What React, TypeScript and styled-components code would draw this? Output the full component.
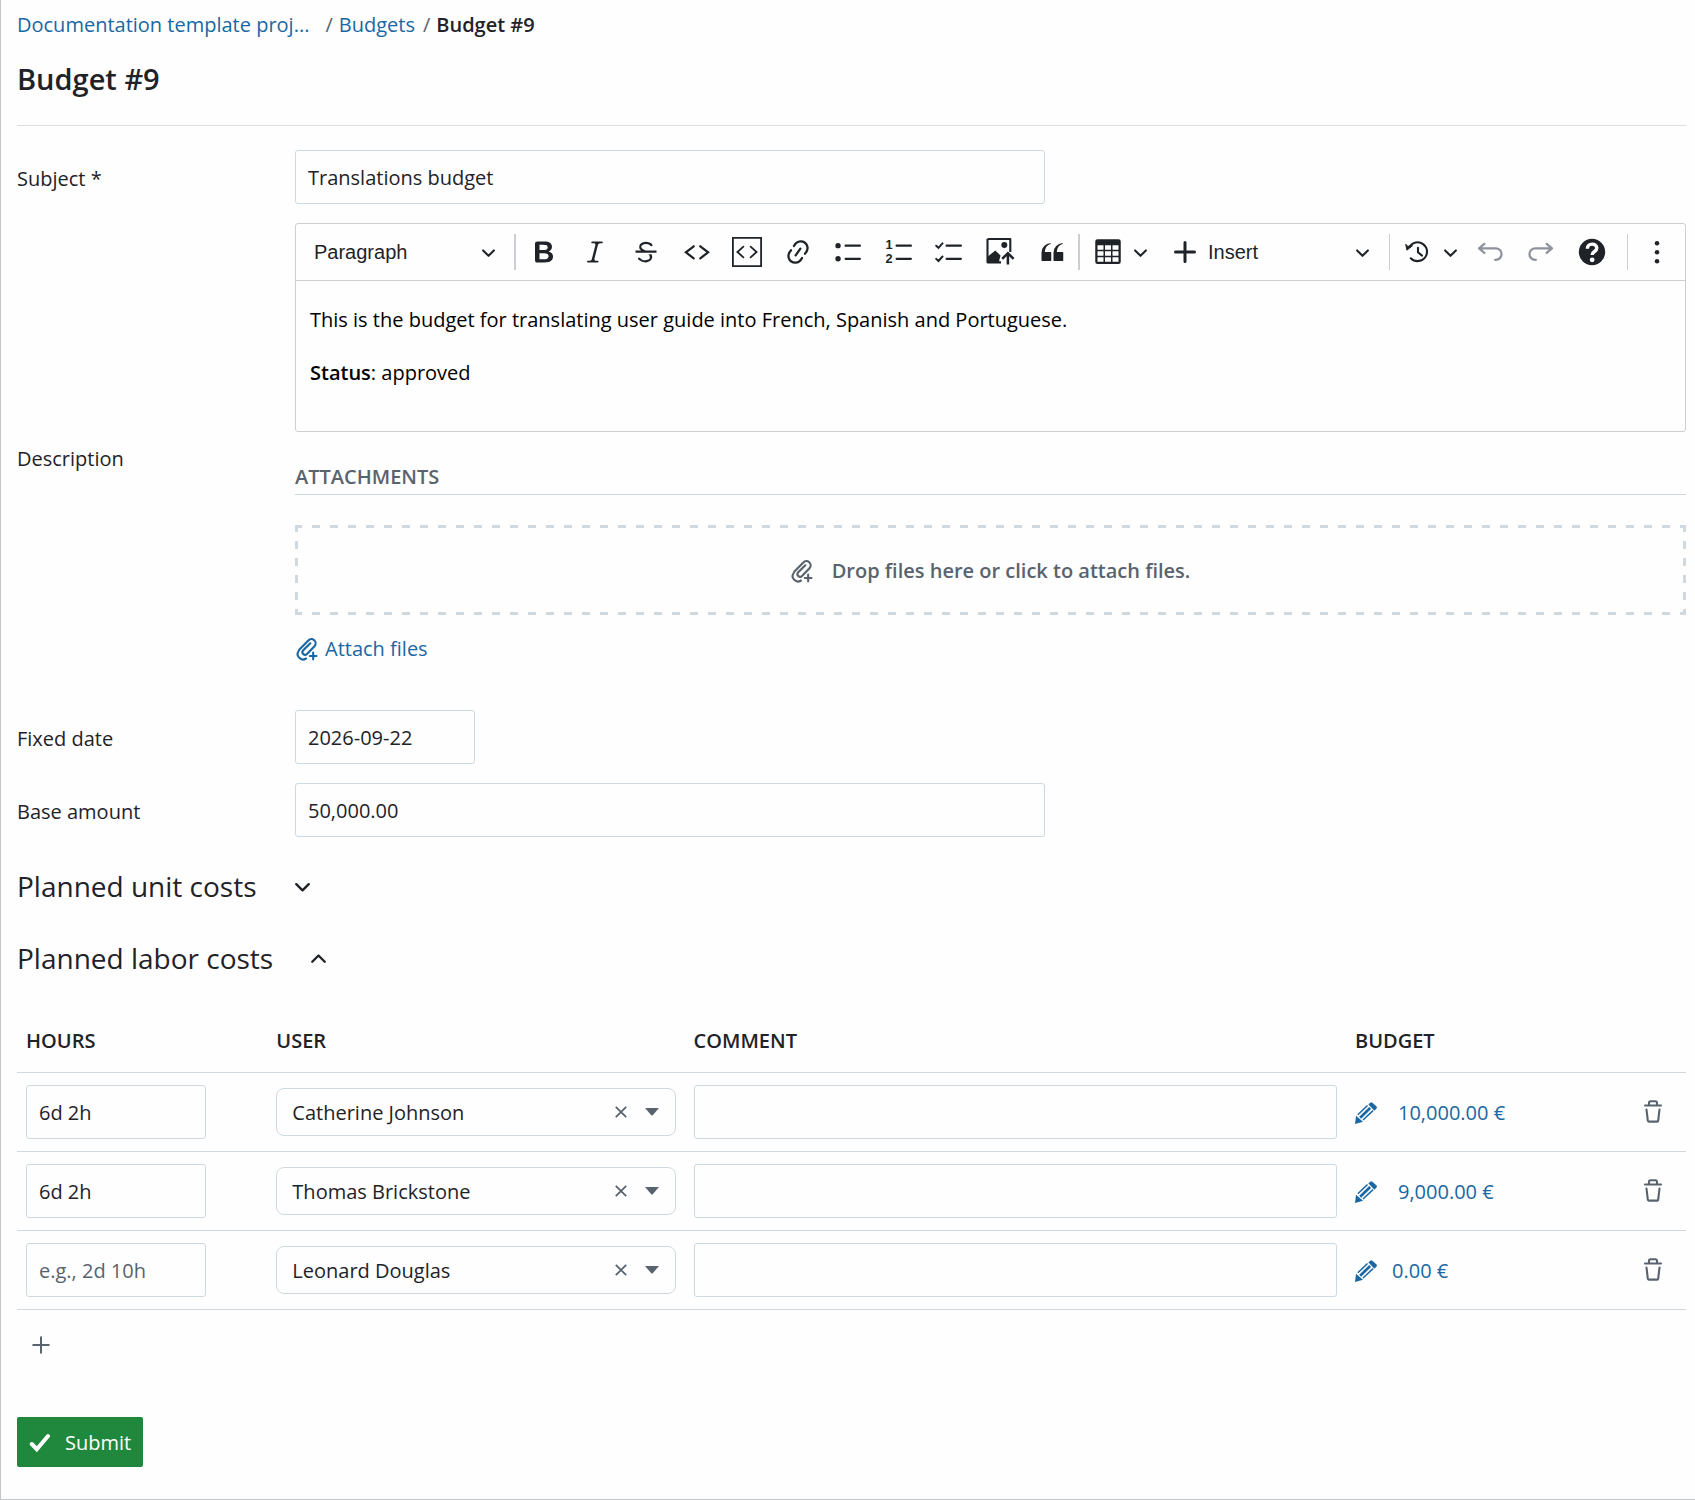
import React, { useState } from "react";
import styled, { createGlobalStyle } from "styled-components";

const color = {
  text: "#1f2328",
  muted: "#59636e",
  link: "#1a67a3",
  border: "#d1d9e0",
  editorBorder: "#ccced1",
  disabled: "#8f919d",
  success: "#1f883d",
};

const GlobalStyle = createGlobalStyle`
  *, *::before, *::after { box-sizing: border-box; }
  body {
    margin: 0;
    background: #fefefe;
    color: ${color.text};
    font-family: "Open Sans", "Noto Sans", sans-serif;
    font-size: 20px;
    line-height: 28px;
  }
  button, input, select { font: inherit; color: inherit; }
`;

const Page = styled.main`
  min-height: 100vh;
  padding: 0 9px 32px 16px;
  border-left: 1px solid #c4c6c8;
  border-bottom: 1px solid #c4c6c8;
`;

const Breadcrumbs = styled.nav`
  ol {
    display: flex;
    align-items: center;
    height: 50px;
    margin: 0;
    padding: 0;
    list-style: none;
  }
  li + li::before {
    content: "/";
    padding: 0 6px 0 8px;
    color: ${color.muted};
  }
  li:first-child { margin-right: 8px; }
  a { color: ${color.link}; text-decoration: none; }
  [aria-current] { font-weight: 600; }
`;

const PageHeader = styled.header`
  padding: 11px 0 28px;
  border-bottom: 1px solid #dcdfe2;
`;

const Title = styled.h1`
  margin: 0;
  font-size: 29px;
  font-weight: 600;
  line-height: 36px;
`;

const Form = styled.form`
  display: flex;
  flex-direction: column;
  align-items: stretch;
`;

const Fields = styled.div`
  display: grid;
  gap: 19px;
  margin: 24px 0 31px;
`;

const Field = styled.div`
  display: grid;
  grid-template-columns: 278px minmax(0, 1fr);
  align-items: center;
`;

const Label = styled.label`
  justify-self: start;
  padding-top: 3px;
`;

const TextInput = styled.input<{ $width: string }>`
  display: block;
  width: 100%;
  max-width: ${(p) => p.$width};
  height: 54px;
  padding: 0 12px;
  border: 1px solid ${color.border};
  border-radius: 3px;
  background: transparent;
  &::placeholder { color: ${color.muted}; opacity: 1; }
`;

const Editor = styled.div`
  border: 1px solid ${color.editorBorder};
  border-radius: 3px;
`;

const Toolbar = styled.div`
  display: flex;
  align-items: center;
  height: 57px;
  border-bottom: 1px solid ${color.editorBorder};
  font-family: "Liberation Sans", Arial, sans-serif;
`;

const Divider = styled.span<{ $thick?: boolean }>`
  flex: none;
  width: ${(p) => (p.$thick ? 2 : 1)}px;
  height: 36px;
  background: ${color.editorBorder};
`;

const ToolGroup = styled.div<{ $width?: string; $grow?: boolean; $pad?: string }>`
  display: flex;
  align-items: center;
  flex: ${(p) => (p.$grow ? "1 1 0" : "none")};
  width: ${(p) => p.$width ?? "auto"};
  padding: ${(p) => p.$pad ?? "0"};
`;

const Tool = styled.button<{ $disabled?: boolean }>`
  display: flex;
  flex: 1 1 0;
  align-items: center;
  justify-content: center;
  min-width: 0;
  height: 46px;
  padding: 0;
  border: 0;
  background: none;
  color: ${(p) => (p.$disabled ? color.disabled : color.text)};
`;

const MenuTool = styled(Tool)`
  flex: none;
  gap: 11px;
  padding: 0 8px 0 13px;
`;

const InsertTool = styled(Tool)`
  justify-content: flex-start;
  gap: 12px;
  padding: 0 20px 0 19px;
  span { flex: 1; text-align: left; }
`;

const SelectBox = styled.div<{ $framed?: boolean }>`
  display: grid;
  grid-template-columns: minmax(0, 1fr) 30px 32px;
  align-items: center;
  width: ${(p) => (p.$framed ? "100%" : "218px")};
  height: ${(p) => (p.$framed ? 48 : 46)}px;
  padding-right: ${(p) => (p.$framed ? 7 : 10)}px;
  border: ${(p) => (p.$framed ? `1px solid ${color.border}` : "0")};
  border-radius: 8px;
  > select {
    grid-area: 1 / 1 / 2 / 4;
    width: 100%;
    height: 100%;
    padding: ${(p) => (p.$framed ? "2px 60px 0 15px" : "0 40px 0 18px")};
    border: 0;
    background: transparent;
    appearance: none;
  }
  > button { grid-area: 1 / 2; }
  > svg { grid-area: 1 / 3; justify-self: center; pointer-events: none; }
`;

const IconButton = styled.button<{ $size: number }>`
  display: flex;
  align-items: center;
  justify-content: center;
  width: ${(p) => p.$size}px;
  height: ${(p) => p.$size}px;
  padding: 0;
  border: 0;
  background: none;
  color: ${color.muted};
`;

const EditorBody = styled.div`
  min-height: 150px;
  padding: 25px 14px 23px;
  color: #000;
  outline: none;
  p { margin: 0 0 25px; }
  p:last-child { margin: 0; }
  strong { font-weight: 600; }
`;

const AttachmentsTitle = styled.h2`
  margin: 31px 0 30px;
  padding-bottom: 3px;
  border-bottom: 1px solid ${color.border};
  color: ${color.muted};
  font-size: 20px;
  font-weight: 600;
  text-transform: uppercase;
`;

const dash = (direction: string, period: number) =>
  `repeating-linear-gradient(${direction}, ${color.border} 0 7px, transparent 7px ${period - 1}px, ${color.border} ${period - 1}px ${period}px)`;

const DropZone = styled.button`
  display: flex;
  align-items: center;
  justify-content: center;
  gap: 19px;
  width: 100%;
  height: 90px;
  padding: 2px 0 0;
  border: 0;
  background:
    ${dash("to right", 18)} top / 100% 3px no-repeat,
    ${dash("to right", 18)} bottom / 100% 3px no-repeat,
    ${dash("to bottom", 17)} left / 3px 100% no-repeat,
    ${dash("to bottom", 17)} right / 3px 100% no-repeat;
  color: ${color.muted};
  font-weight: 600;
`;

const AttachLink = styled.a`
  display: inline-flex;
  align-items: center;
  gap: 7px;
  margin: 20px 0 28px 1px;
  color: ${color.link};
  text-decoration: none;
`;

const SectionTitle = styled.h2`
  margin: 0 0 36px;
  font-size: 28px;
  font-weight: 400;
  line-height: 36px;
`;

const SectionToggle = styled.button`
  display: flex;
  align-items: center;
  gap: 38px;
  padding: 0;
  border: 0;
  background: none;
`;

const CostTable = styled.table`
  width: 100%;
  border-collapse: separate;
  border-spacing: 0;
  table-layout: fixed;
  th {
    height: 61px;
    padding: 0 9px 2px;
    font-weight: 600;
    text-align: left;
    text-transform: uppercase;
  }
  td { height: 79px; padding: 0 9px; }
  th, td { border-bottom: 1px solid ${color.border}; }
`;

const Col = styled.col<{ $width?: string }>`
  width: ${(p) => p.$width ?? "auto"};
`;

const Amount = styled.a<{ $gap: number }>`
  display: flex;
  align-items: center;
  gap: ${(p) => p.$gap}px;
  padding-top: 2px;
  color: ${color.link};
  text-decoration: none;
  white-space: nowrap;
`;

const AddRow = styled.div`
  padding: 15px 4px 52px;
  display: flex;
`;

const Submit = styled.button`
  display: flex;
  align-items: center;
  align-self: flex-start;
  gap: 14px;
  height: 50px;
  padding: 2px 12px 0;
  border: 0;
  border-radius: 2px;
  background: ${color.success};
  color: #fff;
`;

const Glyph = ({ d, children }: { d?: string; children?: React.ReactNode }) => (
  <svg width="30" height="30" viewBox="0 0 20 20" fill="currentColor" aria-hidden="true">
    {d && <path d={d} />}
    {children}
  </svg>
);

const Chevron = ({ up, size = 13 }: { up?: boolean; size?: number }) => (
  <svg width={size} height={size} viewBox="0 0 14 14" fill="none" stroke="currentColor" strokeWidth="2.2" strokeLinecap="round" strokeLinejoin="round" aria-hidden="true">
    <path d={up ? "M1.2 10 7 4.2 12.8 10" : "M1.2 4.8 7 10.6 12.8 4.8"} />
  </svg>
);

const ClipIcon = () => (
  <svg width="22" height="23" viewBox="88 178 66 69" fill="none" stroke="currentColor" strokeWidth="6.4" strokeLinecap="round" aria-hidden="true">
    <path d="M118 239.500a16 16 0 0 1-22-22.500Q97 214 99 212L125 185.500a12.500 12.500 0 0 1 18.500 17L121 226a8 8 0 0 1-12-10.500L131 194" />
    <path d="M139.500 222v20M129.500 232h20" />
  </svg>
);

const PencilIcon = () => (
  <svg width="22" height="22" viewBox="168 248 66 66" fill="currentColor" aria-hidden="true">
    <path d="M208 255l6-5a5 5 0 0 1 6 0l12 11a5 5 0 0 1 0 7l-6 6z" />
    <path d="M171 289l21 18-24 7z" />
    <path d="M176.500 286.500l29-28M192 302l30-28" fill="none" stroke="currentColor" strokeWidth="4.500" />
    <path d="M183.500 295l30-29" fill="none" stroke="currentColor" strokeWidth="8" />
  </svg>
);

const TrashIcon = () => (
  <svg width="20" height="24" viewBox="0 0 20 24" fill="none" stroke="currentColor" strokeWidth="2.1" strokeLinecap="round" strokeLinejoin="round" aria-hidden="true">
    <path d="M2 5.500h16M6 5.300V2.700a1.500 1.500 0 0 1 1.500-1.500h5a1.500 1.500 0 0 1 1.500 1.500v2.600M3.500 9.500l1.300 11.200a1 1 0 0 0 1 .900h8.400a1 1 0 0 0 1-.900L16.500 9.500" />
  </svg>
);

const PlusIcon = ({ size, weight }: { size: number; weight: number }) => (
  <svg width={size} height={size} viewBox="0 0 22 22" fill="none" stroke="currentColor" strokeWidth={weight} strokeLinecap="round" aria-hidden="true">
    <path d="M11 1.500v19M1.500 11h19" />
  </svg>
);

const paths = {
  bold: "M10.187 17H5.773c-.637 0-1.092-.138-1.364-.415-.273-.277-.409-.718-.409-1.323V4.738c0-.617.14-1.062.419-1.332.279-.27.73-.406 1.354-.406h4.68c.69 0 1.288.041 1.793.124.506.083.96.242 1.36.478.341.197.644.447.906.75a3.262 3.262 0 0 1 .808 2.162c0 1.401-.722 2.426-2.167 3.075C15.05 10.175 16 11.315 16 13.01a3.756 3.756 0 0 1-2.296 3.504 6.1 6.1 0 0 1-1.517.377c-.571.073-1.238.11-2 .11zm-.217-6.217H7v4.087h3.069c1.977 0 2.965-.69 2.965-2.072 0-.707-.256-1.22-.768-1.537-.512-.319-1.277-.478-2.296-.478zM7 5.13v3.619h2.606c.729 0 1.292-.067 1.69-.2a1.6 1.6 0 0 0 .91-.765c.165-.267.247-.566.247-.897 0-.707-.26-1.176-.778-1.409-.519-.232-1.31-.348-2.375-.348H7z",
  italic: "m9.586 14.633.021.004c-.036.335.095.655.393.962.082.083.173.15.274.201h1.474a.6.6 0 1 1 0 1.2H5.304a.6.6 0 0 1 0-1.2h1.15c.474-.07.809-.182 1.005-.334.157-.122.291-.32.404-.597l2.416-9.55a1.053 1.053 0 0 0-.281-.823 1.12 1.12 0 0 0-.442-.296H8.15a.6.6 0 0 1 0-1.2h6.443a.6.6 0 1 1 0 1.2h-1.195c-.376.056-.65.155-.823.296-.215.175-.423.439-.623.79l-2.366 9.347z",
  strike: "M7 16.4c-.8-.4-1.5-.9-2.2-1.5a.6.6 0 0 1-.2-.5l.3-.6h1c1 1.2 2.1 1.7 3.7 1.7 1 0 1.8-.3 2.3-.6.6-.4.6-1.2.6-1.3.2-1.2-.9-2.1-.9-2.1h2.1c.3.7.4 1.2.4 1.7v.8l-.6 1.2c-.6.8-1.1 1-1.6 1.2a6 6 0 0 1-2.4.6c-1 0-1.8-.3-2.5-.6zM6.8 9 6 8.3c-.4-.5-.5-.8-.5-1.6 0-.7.1-1.3.5-1.8.4-.6 1-1 1.6-1.3a6.3 6.3 0 0 1 4.7 0 4 4 0 0 1 1.7 1l.3.7c0 .1.2.4-.2.7-.4.2-.9.1-1 0a3 3 0 0 0-1.2-1c-.4-.2-1-.3-2-.4-.7 0-1.4.2-2 .6-.8.6-1 .8-1 1.5 0 .8.5 1 1.2 1.5.6.4 1.1.7 1.9 1H6.8zM3 10.5V9h14v1.5z",
  link: "m11.077 15 .991-1.416a.75.75 0 1 1 1.229.86l-1.148 1.64a.748.748 0 0 1-.217.206 5.251 5.251 0 0 1-8.503-5.955.741.741 0 0 1 .12-.274l1.147-1.639a.75.75 0 1 1 1.228.86L4.933 10.7l.006.003a3.75 3.75 0 0 0 6.132 4.294l.006.004zm5.494-5.335a.748.748 0 0 1-.12.274l-1.147 1.639a.75.75 0 1 1-1.228-.86l.86-1.23a3.75 3.75 0 0 0-6.144-4.301l-.86 1.229a.75.75 0 0 1-1.229-.86l1.148-1.64a.748.748 0 0 1 .217-.206 5.251 5.251 0 0 1 8.503 5.955zm-4.563-2.532a.75.75 0 0 1 .184 1.045l-3.155 4.505a.75.75 0 1 1-1.229-.86l3.155-4.506a.75.75 0 0 1 1.045-.184z",
  lines: "M7 5.750c0 .414.336.75.75.75h9.500a.75.75 0 1 0 0-1.500h-9.500a.75.75 0 0 0-.75.75zM7 14.500c0 .414.336.75.75.75h9.500a.75.75 0 1 0 0-1.500h-9.500a.75.75 0 0 0-.75.75z",
  quote: "M3 10.423a6.5 6.5 0 0 1 6.056-6.408l.038.67C6.448 5.423 5.354 7.663 5.22 10H9c.552 0 .5.432.5.986v4.511c0 .554-.448.503-1 .503h-5c-.552 0-.5-.449-.5-1.003v-4.574zm8 0a6.5 6.5 0 0 1 6.056-6.408l.038.67c-2.646.739-3.74 2.979-3.873 5.315H17c.552 0 .5.432.5.986v4.511c0 .554-.448.503-1 .503h-5c-.552 0-.5-.449-.5-1.003v-4.574z",
  table: "M3 5.5v3h4v-3H3Zm0 4v3h4v-3H3Zm0 4v3h4v-3H3Zm5 3h4v-3H8v3Zm5 0h4v-3h-4v3Zm4-4v-3h-4v3h4Zm0-4v-3h-4v3h4Zm1.5 8A1.5 1.5 0 0 1 17 18H3a1.500 1.500 0 0 1-1.500-1.500V3A1.500 1.500 0 0 1 3 1.500h14A1.500 1.500 0 0 1 18.500 3v13.500Zm-6.500-4v-3H8v3h4Zm0-4v-3H8v3h4Z",
};

const ImageGlyph = () => (
  <Glyph>
    <path d="M1 1.300h15.200v8.700M10 16.900H1V1.300" fill="none" stroke="currentColor" strokeWidth="1.400" strokeLinejoin="round" />
    <circle cx="12.200" cy="5.400" r="2" />
    <path d="M1 13.200 6.200 9l3.500 3.400-1.200 4.600H1z" />
    <path d="M14.600 18.300v-7.200M10.800 14.600l3.800-3.800 3.800 3.800" fill="none" stroke="currentColor" strokeWidth="1.700" />
  </Glyph>
);

const UndoGlyph = ({ flip }: { flip?: boolean }) => (
  <Glyph>
    <path
      d="M6.200 4.600 2.700 7.600l3.500 3M3.200 7.600h10.700a3.800 3.800 0 0 1 0 7.600h-.500"
      transform={flip ? "translate(20 0) scale(-1 1)" : undefined}
      fill="none" stroke="currentColor" strokeWidth="1.500" strokeLinecap="round" strokeLinejoin="round"
    />
  </Glyph>
);

const inlineTools: { name: string; icon: React.ReactNode }[] = [
  { name: "Bold", icon: <Glyph d={paths.bold} /> },
  { name: "Italic", icon: <Glyph d={paths.italic} /> },
  { name: "Strikethrough", icon: <Glyph d={paths.strike} /> },
  { name: "Code", icon: <Glyph><path d="M7.800 6.200 2.600 10.200l5.200 4M12.200 6.200l5.200 4-5.200 4" fill="none" stroke="currentColor" strokeWidth="1.500" strokeLinecap="round" /></Glyph> },
  { name: "Code block", icon: <Glyph><path d="M.600.600h18.800v18.800H.600zM7.600 6.400 3.600 10l4 3.600M12.400 6.400l4 3.600-4 3.600" fill="none" stroke="currentColor" strokeWidth="1.200" strokeLinecap="round" /></Glyph> },
  { name: "Link", icon: <Glyph d={paths.link} /> },
  { name: "Bulleted list", icon: <Glyph d={paths.lines}><circle cx="2.700" cy="5.750" r="1.800" /><circle cx="2.700" cy="14.500" r="1.800" /></Glyph> },
  { name: "Numbered list", icon: <Glyph d={paths.lines}><text x="0.300" y="8.200" fontSize="8.500" fontWeight="700">1</text><text x="0.300" y="17.600" fontSize="8.500" fontWeight="700">2</text></Glyph> },
  { name: "To-do list", icon: <Glyph d={paths.lines}><path d="M.800 5.800l1.500 1.400 2.700-3M.800 14.600l1.500 1.400 2.700-3" fill="none" stroke="currentColor" strokeWidth="1.300" strokeLinecap="round" /></Glyph> },
  { name: "Upload image", icon: <ImageGlyph /> },
  { name: "Block quote", icon: <Glyph d={paths.quote} /> },
];

const rows = [
  { hours: "6d 2h", user: "Catherine Johnson", amount: "10,000.00 €", gap: 21 },
  { hours: "6d 2h", user: "Thomas Brickstone", amount: "9,000.00 €", gap: 21 },
  { hours: "", user: "Leonard Douglas", amount: "0.00 €", gap: 15 },
];

const EditorToolbar = () => (
  <Toolbar role="toolbar" aria-label="Editor toolbar">
    <SelectBox>
      <select aria-label="Heading" defaultValue="Paragraph">
        <option>Paragraph</option>
        <option>Heading 1</option>
        <option>Heading 2</option>
      </select>
      <Chevron />
    </SelectBox>
    <Divider $thick />
    <ToolGroup $width="562px" $pad="0 1px 0 3px">
      {inlineTools.map((t) => (
        <Tool key={t.name} type="button" aria-label={t.name}>{t.icon}</Tool>
      ))}
    </ToolGroup>
    <Divider $thick />
    <MenuTool type="button" aria-label="Insert table">
      <Glyph d={paths.table} />
      <Chevron />
    </MenuTool>
    <ToolGroup $grow>
      <InsertTool type="button" aria-haspopup="menu">
        <PlusIcon size={22} weight={3} />
        <span>Insert</span>
        <Chevron />
      </InsertTool>
    </ToolGroup>
    <Divider />
    <MenuTool type="button" aria-label="Revision history">
      <Glyph>
        <path d="M4.300 6.600a6.300 6.300 0 1 1 .9 7.600M10 7.200v3l2.700 2.200" fill="none" stroke="currentColor" strokeWidth="1.400" strokeLinecap="round" />
        <path d="M1.800 4.800 3.200 6.200l3.200-.4-3.800 3z" stroke="currentColor" strokeWidth=".6" />
      </Glyph>
      <Chevron />
    </MenuTool>
    <ToolGroup $width="162px" $pad="0 10px 0 0">
      <Tool type="button" aria-label="Undo" $disabled><UndoGlyph /></Tool>
      <Tool type="button" aria-label="Redo" $disabled><UndoGlyph flip /></Tool>
      <Tool type="button" aria-label="Help">
        <Glyph>
          <circle cx="10" cy="10" r="8.800" />
          <path d="M6.900 7.800c0-4 6.300-4 6.300-.4 0 2.500-3.100 2.100-3.100 4.600" fill="none" stroke="#fff" strokeWidth="2.300" />
          <circle cx="10.100" cy="15.200" r="1.600" fill="#fff" />
        </Glyph>
      </Tool>
    </ToolGroup>
    <ToolGroup $width="58px">
      <Divider />
      <Tool type="button" aria-label="Show more items">
        <Glyph><circle cx="10" cy="4.200" r="1.500" /><circle cx="10" cy="10.200" r="1.500" /><circle cx="10" cy="16.200" r="1.500" /></Glyph>
      </Tool>
    </ToolGroup>
  </Toolbar>
);

export default function App() {
  const [unitOpen, setUnitOpen] = useState(false);
  const [laborOpen, setLaborOpen] = useState(true);

  return (
    <Page>
      <GlobalStyle />
      <Breadcrumbs aria-label="Breadcrumb">
        <ol>
          <li><a href="#project">Documentation template proj...</a></li>
          <li><a href="#budgets">Budgets</a></li>
          <li><span aria-current="page">Budget #9</span></li>
        </ol>
      </Breadcrumbs>
      <PageHeader>
        <Title>Budget #9</Title>
      </PageHeader>
      <Form onSubmit={(e) => e.preventDefault()}>
        <Fields>
          <Field>
            <Label htmlFor="subject">Subject *</Label>
            <TextInput id="subject" $width="750px" defaultValue="Translations budget" />
          </Field>
          <Field>
            <Label as="span" id="description-label">Description</Label>
            <div>
              <Editor>
                <EditorToolbar />
                <EditorBody role="textbox" aria-multiline="true" aria-labelledby="description-label" contentEditable suppressContentEditableWarning spellCheck={false}>
                  <p>This is the budget for translating user guide into French, Spanish and Portuguese.</p>
                  <p><strong>Status</strong>: approved</p>
                </EditorBody>
              </Editor>
              <AttachmentsTitle>Attachments</AttachmentsTitle>
              <DropZone type="button">
                <ClipIcon />
                Drop files here or click to attach files.
              </DropZone>
              <AttachLink href="#attach">
                <ClipIcon />
                Attach files
              </AttachLink>
            </div>
          </Field>
          <Field>
            <Label htmlFor="fixed-date">Fixed date</Label>
            <TextInput id="fixed-date" $width="180px" defaultValue="2026-09-22" />
          </Field>
          <Field>
            <Label htmlFor="base-amount">Base amount</Label>
            <TextInput id="base-amount" $width="750px" defaultValue="50,000.00" />
          </Field>
        </Fields>

        <SectionTitle>
          <SectionToggle type="button" aria-expanded={unitOpen} onClick={() => setUnitOpen(!unitOpen)}>
            Planned unit costs
            <Chevron up={unitOpen} size={15} />
          </SectionToggle>
        </SectionTitle>
        <SectionTitle>
          <SectionToggle type="button" aria-expanded={laborOpen} onClick={() => setLaborOpen(!laborOpen)}>
            Planned labor costs
            <Chevron up={laborOpen} size={15} />
          </SectionToggle>
        </SectionTitle>

        {laborOpen && (
          <>
            <CostTable>
              <colgroup>
                <Col $width="15%" />
                <Col $width="25%" />
                <Col />
                <Col $width="274px" />
                <Col $width="66px" />
              </colgroup>
              <thead>
                <tr>
                  <th scope="col">Hours</th>
                  <th scope="col">User</th>
                  <th scope="col">Comment</th>
                  <th scope="col">Budget</th>
                  <th aria-label="Actions" />
                </tr>
              </thead>
              <tbody>
                {rows.map((r) => (
                  <tr key={r.user}>
                    <td><TextInput aria-label="Hours" $width="180px" defaultValue={r.hours} placeholder="e.g., 2d 10h" /></td>
                    <td>
                      <SelectBox $framed>
                        <select aria-label="User" defaultValue={r.user}>
                          {rows.map((o) => <option key={o.user}>{o.user}</option>)}
                        </select>
                        <IconButton type="button" $size={30} aria-label="Clear user">
                          <svg width="12" height="12" viewBox="0 0 12 12" fill="none" stroke="currentColor" strokeWidth="1.800" aria-hidden="true">
                            <path d="M.800.800l10.400 10.400M11.200.800.800 11.200" />
                          </svg>
                        </IconButton>
                        <svg width="14" height="8" viewBox="0 0 14 8" fill={color.muted} aria-hidden="true"><path d="M0 0h14L7.500 7.500h-1z" /></svg>
                      </SelectBox>
                    </td>
                    <td><TextInput aria-label="Comment" $width="none" /></td>
                    <td>
                      <Amount href="#edit-amount" $gap={r.gap}>
                        <PencilIcon />
                        {r.amount}
                      </Amount>
                    </td>
                    <td>
                      <IconButton type="button" $size={48} aria-label="Delete row"><TrashIcon /></IconButton>
                    </td>
                  </tr>
                ))}
              </tbody>
            </CostTable>
            <AddRow>
              <IconButton type="button" $size={40} aria-label="Add planned labor costs">
                <PlusIcon size={18} weight={2.4} />
              </IconButton>
            </AddRow>
          </>
        )}

        <Submit type="submit">
          <svg width="22" height="20" viewBox="0 0 22 20" fill="none" stroke="currentColor" strokeWidth="4" strokeLinecap="round" aria-hidden="true">
            <path d="M2.800 11l5 5.200L19 3" />
          </svg>
          Submit
        </Submit>
      </Form>
    </Page>
  );
}
